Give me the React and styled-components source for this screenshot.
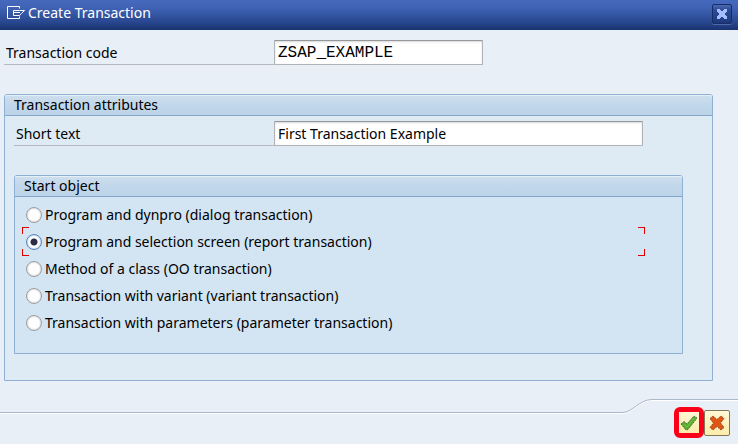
import { useState } from "react";
import styled, { createGlobalStyle } from "styled-components";

const startObjects = [
  { id: "dialog", label: "Program and dynpro (dialog transaction)" },
  { id: "report", label: "Program and selection screen (report transaction)" },
  { id: "oo", label: "Method of a class (OO transaction)" },
  { id: "variant", label: "Transaction with variant (variant transaction)" },
  {
    id: "parameter",
    label: "Transaction with parameters (parameter transaction)",
  },
];

const WindowIcon = () => (
  <svg width="19" height="14" viewBox="0 0 19 14" fill="none" stroke="#ffffff">
    <path d="M12.500 2.500V.5H.5v12h12v-2" />
    <path d="M12.500 4.500h-6v5h6l2-2 3-3h-5M7 6.500h6" />
  </svg>
);

const CloseIcon = () => (
  <svg width="10" height="10" viewBox="0 0 10 10" fill="#a3bdff">
    <path d="M0 0h3v1h1v1h2V1h1V0h3v3H9v1H8v2h1v1h1v3H7V9H6V8H4v1H3v1H0V7h1V6h1V4H1V3H0z" />
  </svg>
);

const CheckIcon = () => (
  <svg width="18" height="16" viewBox="0 0 18 16">
    <path
      d="M1 9 4 6.500 7 9 14 1 17 3 8 14.500 6 15z"
      fill="#58ad2c"
      stroke="#4a6f3a"
      strokeDasharray="2 1"
    />
    <path d="M3.500 9 7 12 14.500 3" fill="none" stroke="#7bc846" />
  </svg>
);

const CancelIcon = () => (
  <svg width="16" height="16" viewBox="0 0 16 16">
    <path
      d="M1 3.500 4 1 8 4.500 12 1 15 3.500 11.500 8 15 12.500 12 15 8 11.500 4 15 1 12.500 4.500 8z"
      fill="#de5514"
      stroke="#8f4426"
      strokeDasharray="2 1"
    />
  </svg>
);

const App = () => {
  const [code, setCode] = useState("ZSAP_EXAMPLE");
  const [shortText, setShortText] = useState("First Transaction Example");
  const [startObject, setStartObject] = useState("report");

  return (
    <>
      <GlobalStyle />
      <StyledDialog>
        <StyledTitleBar>
          <WindowIcon />
          <StyledTitle>Create Transaction</StyledTitle>
          <StyledCloseButton type="button" aria-label="Close">
            <CloseIcon />
          </StyledCloseButton>
        </StyledTitleBar>
        <StyledContent>
          <StyledField>
            <StyledLabel htmlFor="code" $width={270}>
              Transaction code
            </StyledLabel>
            <StyledInput
              id="code"
              $width={209}
              $mono
              value={code}
              onChange={(e) => setCode(e.target.value)}
            />
          </StyledField>
          <StyledAttributes>
            <StyledGroupTitle>Transaction attributes</StyledGroupTitle>
            <StyledAttributesBody>
              <StyledField>
                <StyledLabel htmlFor="shortText" $width={260}>
                  Short text
                </StyledLabel>
                <StyledInput
                  id="shortText"
                  $width={369}
                  value={shortText}
                  onChange={(e) => setShortText(e.target.value)}
                />
              </StyledField>
              <StyledStartObject role="radiogroup" aria-labelledby="startTitle">
                <StyledGroupTitle id="startTitle">Start object</StyledGroupTitle>
                <StyledRadioList>
                  {startObjects.map(({ id, label }) => (
                    <StyledRadioRow key={id} $focused={id === startObject}>
                      <StyledRadio
                        type="radio"
                        name="startObject"
                        value={id}
                        checked={id === startObject}
                        onChange={() => setStartObject(id)}
                      />
                      {label}
                    </StyledRadioRow>
                  ))}
                </StyledRadioList>
              </StyledStartObject>
            </StyledAttributesBody>
          </StyledAttributes>
        </StyledContent>
        <StyledFooter>
          <StyledFooterLine />
          <svg width="40" height="16" viewBox="0 0 40 16" fill="none">
            <path
              d="M0 14.500h3C14 14.500 20 1.500 33 1.500h7"
              stroke="#ffffff"
            />
            <path d="M0 13.500h3C14 13.500 20 .5 33 .5h7" stroke="#a9b8c9" />
          </svg>
          <StyledActions>
            <StyledMarked>
              <StyledButton type="button" aria-label="Continue">
                <CheckIcon />
              </StyledButton>
            </StyledMarked>
            <StyledButton type="button" aria-label="Cancel" $bordered>
              <CancelIcon />
            </StyledButton>
          </StyledActions>
        </StyledFooter>
      </StyledDialog>
    </>
  );
};
export default App;

const GlobalStyle = createGlobalStyle`
  * {
    box-sizing: border-box;
  }
  body {
    margin: 0;
    background: #e8eff7;
    color: #000000;
    font-family: "Noto Sans", "DejaVu Sans", sans-serif;
    font-size: 14px;
    line-height: 20px;
  }
  svg {
    display: block;
    flex-shrink: 0;
  }
`;

const StyledDialog = styled.main`
  display: flex;
  flex-direction: column;
  min-height: 100vh;
`;

const StyledTitleBar = styled.header`
  display: flex;
  align-items: center;
  gap: 2px;
  height: 30px;
  padding: 0 6px 4px 7px;
  background: linear-gradient(#4569bd 0%, #4063b5 25%, #28468e 75%, #19336f 100%);
`;

const StyledTitle = styled.h1`
  flex: 1;
  margin: 0;
  color: #ffffff;
  font-size: 14px;
  font-weight: normal;
`;

const StyledCloseButton = styled.button`
  display: flex;
  align-items: center;
  justify-content: center;
  width: 20px;
  height: 20px;
  margin-top: 2px;
  padding: 0;
  border: 1px solid #172d67;
  border-radius: 2px;
  background: linear-gradient(#4c69b0, #2b4a94 30%, #1e397e);
  box-shadow: 0 1px 0 #5069a5;
`;

const StyledContent = styled.div`
  display: flex;
  flex-direction: column;
  gap: 29px;
  padding: 10px 25px 18px 4px;
`;

const StyledField = styled.div`
  display: flex;
`;

const StyledLabel = styled.label`
  flex-shrink: 0;
  width: ${({ $width }) => $width}px;
  height: 25px;
  padding: 3px 2px 0;
  border-bottom: 1px solid #b4babf;
`;

const StyledInput = styled.input`
  width: ${({ $width }) => $width}px;
  min-width: 0;
  height: 25px;
  padding: 0 3px;
  border: 1px solid #b0b4b8;
  border-top-color: #94989c;
  border-radius: 1px;
  outline: none;
  background: #ffffff;
  box-shadow: inset 0 1px 2px #d8d8d8;
  color: #000000;
  font-family: ${({ $mono }) =>
    $mono
      ? '"Liberation Mono", monospace'
      : '"Noto Sans", "DejaVu Sans", sans-serif'};
  font-size: ${({ $mono }) => ($mono ? "16px" : "14px")};
`;

const StyledGroup = styled.section`
  border: 1px solid #8fb0d2;
  border-radius: 3px 3px 0 0;
`;

const StyledAttributes = styled(StyledGroup)`
  background: #deebf4;
`;

const StyledStartObject = styled(StyledGroup)`
  margin: 29px 20px 0 0;
  background: #d3e5f3;
`;

const StyledGroupTitle = styled.h2`
  height: 21px;
  margin: 0;
  padding: 0 9px;
  border-bottom: 1px solid #85a6cb;
  border-radius: 2px 2px 0 0;
  background: linear-gradient(#cfdfed, #c1d7eb 50%, #bdd4e8);
  box-shadow: inset 0 1px 0 #e5eff8;
  font-size: 14px;
  font-weight: normal;
`;

const StyledAttributesBody = styled.div`
  padding: 5px 9px 26px;
`;

const StyledRadioList = styled.div`
  padding: 3px 37px 18px 7px;
`;

/* the focused row is framed by four red corner marks */
const corner = "linear-gradient(#e00000, #e00000)";

const StyledRadioRow = styled.label`
  display: flex;
  align-items: center;
  gap: 3px;
  height: 29px;
  margin-bottom: -2px;
  padding-left: 4px;
  ${({ $focused }) =>
    $focused &&
    `
    background:
      ${corner} left top / 7px 1px,
      ${corner} left top / 1px 7px,
      ${corner} right top / 7px 1px,
      ${corner} right top / 1px 7px,
      ${corner} left bottom / 7px 1px,
      ${corner} left bottom / 1px 7px,
      ${corner} right bottom / 7px 1px,
      ${corner} right bottom / 1px 7px;
    background-repeat: no-repeat;
  `}
`;

const StyledRadio = styled.input`
  appearance: none;
  flex-shrink: 0;
  width: 16px;
  height: 16px;
  margin: 0;
  border: 1px solid #9a9da1;
  border-radius: 50%;
  background: #ffffff;
  box-shadow: inset 0 0 2px #b0b0b0;
  &:checked {
    border-color: #5685b9;
    background: radial-gradient(circle, #2c2c44 0 3px, #ffffff 4px);
    box-shadow: inset 0 0 2px #6f9fd0;
  }
`;

const StyledFooter = styled.footer`
  display: flex;
  align-items: flex-start;
  margin-top: auto;
  height: 45px;
`;

const StyledFooterLine = styled.div`
  flex: 1;
  height: 15px;
  border-bottom: 1px solid #ffffff;
  box-shadow: inset 0 -1px 0 #a9b8c9;
`;

const StyledActions = styled.div`
  display: flex;
  align-items: center;
  padding: 7px 8px 0 15px;
  border-top: 1px solid #a9b8c9;
  box-shadow: inset 0 1px 0 #ffffff;
`;

const StyledMarked = styled.div`
  border: 5px solid #fb0019;
  border-radius: 6px;
`;

const StyledButton = styled.button`
  display: flex;
  align-items: center;
  justify-content: center;
  width: ${({ $bordered }) => ($bordered ? 26 : 20)}px;
  height: ${({ $bordered }) => ($bordered ? 26 : 21)}px;
  padding: 0;
  border: ${({ $bordered }) => ($bordered ? "1px solid #83775b" : "none")};
  border-radius: ${({ $bordered }) => ($bordered ? 2 : 0)}px;
  background: linear-gradient(#fff8d5, #fcebaa);
`;
